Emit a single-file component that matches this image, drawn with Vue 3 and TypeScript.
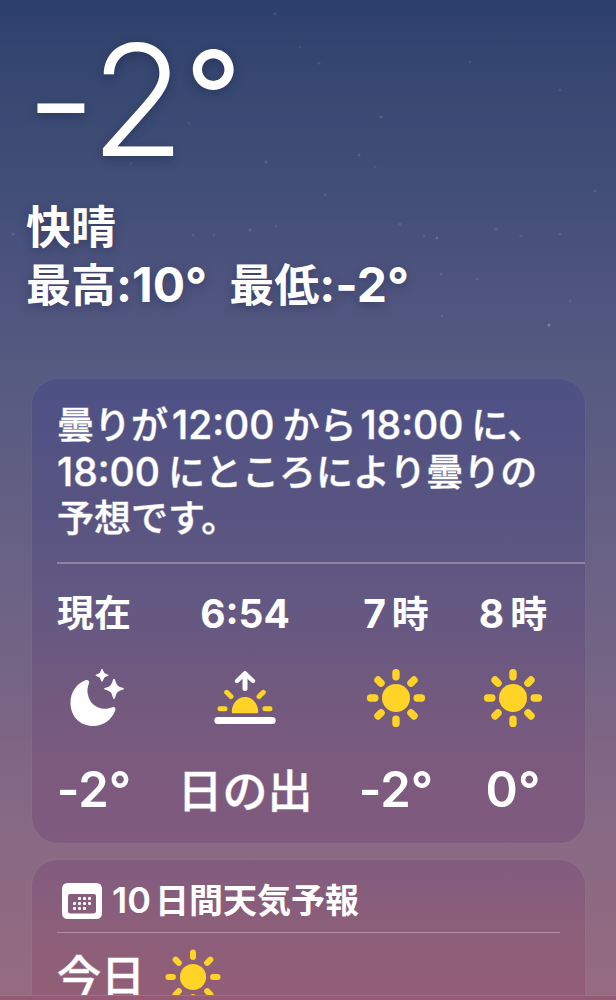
<script setup lang="ts">
type IconName = 'moon' | 'sunrise' | 'sun'

interface Hour {
  digits: string
  label: string
  icon: IconName
  iconLabel: string
  temp?: string
  event?: string
}

const hours: Hour[] = [
  { digits: '', label: '現在', icon: 'moon', iconLabel: '快晴の夜', temp: '-2°' },
  { digits: '6:54', label: '', icon: 'sunrise', iconLabel: '日の出', event: '日の出' },
  { digits: '7', label: '時', icon: 'sun', iconLabel: '晴れ', temp: '-2°' },
  { digits: '8', label: '時', icon: 'sun', iconLabel: '晴れ', temp: '0°' },
]

const rays = [0, 45, 90, 135, 180, 225, 270, 315]

const stars: [number, number, number][] = [
  [275, 14, 0.1], [381, 117, 0.13], [359, 155, 0.13], [266, 162, 0.13], [189, 123, 0.06],
  [319, 63, 0.1], [300, 47, 0.08], [375, 167, 0.08], [13, 234, 0.12], [250, 230, 0.13],
  [193, 235, 0.1], [214, 235, 0.08], [276, 226, 0.08], [325, 195, 0.09], [400, 224, 0.09],
  [424, 236, 0.09], [437, 238, 0.17], [496, 229, 0.09], [521, 236, 0.1], [560, 234, 0.1],
  [595, 191, 0.12], [441, 274, 0.12], [477, 279, 0.1], [570, 301, 0.09], [549, 325, 0.26],
  [442, 316, 0.09], [131, 163, 0.06], [470, 62, 0.08], [560, 90, 0.08],
]

const dots: [number, number][] = [
  [16, 14], [21, 14], [26, 14],
  [11, 19], [16, 19], [21, 19], [26, 19],
  [11, 24], [16, 24], [21, 24],
]
</script>

<template>
  <div class="screen">
    <svg class="stars" aria-hidden="true">
      <circle v-for="([x, y, o], i) in stars" :key="i" :cx="x" :cy="y" r="1.5" fill="#fff" :opacity="o" />
    </svg>

    <main class="content">
      <header class="hero">
        <h1 class="now">-2<span class="degree">°</span></h1>
        <p class="line">快晴</p>
        <p class="line range">
          <span>最高<span class="num">:10°</span></span>
          <span>最低<span class="num">:-2°</span></span>
        </p>
      </header>

      <section class="card hourly" aria-label="1時間ごとの天気">
        <p class="summary">
          曇りが<span class="num">12:00</span>から<span class="num">18:00</span>に、<br />
          <span class="num first">18:00</span>にところにより曇りの<br />
          予想です。
        </p>
        <ul class="hours">
          <li v-for="(h, i) in hours" :key="i" class="hour" :class="{ wide: h.event }">
            <span class="time"><span v-if="h.digits" class="num">{{ h.digits }}</span><span v-if="h.label">{{ h.label }}</span></span>
            <svg v-if="h.icon === 'moon'" class="icon" viewBox="0 0 60 60" role="img" :aria-label="h.iconLabel">
              <path fill="#fff" d="M21.5 12.3C23.8 11.4 25.8 13 25.1 15.3C23.3 19 23.2 22.8 23.7 25.8C25.2 34.7 32 40.7 40.5 40.7C43.8 40.7 46.3 40 48.5 39.2C50.7 38.7 52 40.2 51.3 42.3C47.7 51.9 39.5 58 29.3 58C16 58 6.5 48.4 6.5 34.7C6.5 24.5 12.3 15.7 21.5 12.3Z" />
              <path fill="#fff" d="M38 .7Q38.8 .7 39.1 2.4Q39.8 5.5 43 6.2Q44.7 6.6 44.7 7.2Q44.7 7.8 43 8.2Q39.8 8.9 39.1 12Q38.8 13.7 38 13.7Q37.2 13.7 36.9 12Q36.2 8.9 33 8.2Q31.5 7.8 31.5 7.2Q31.5 6.6 33 6.2Q36.2 5.5 36.9 2.4Q37.2 .7 38 .7Z" />
              <path fill="#fff" d="M50 10.7Q51 10.7 51.3 12.7Q52.5 18.2 57.5 19.5Q60 20 60 20.8Q60 21.6 57.5 22.1Q52.5 23.4 51.3 28.9Q51 31 50 31Q49 31 48.7 28.9Q47.5 23.4 42.5 22.1Q40 21.6 40 20.8Q40 20 42.5 19.5Q47.5 18.2 48.7 12.7Q49 10.7 50 10.7Z" />
            </svg>
            <svg v-else-if="h.icon === 'sunrise'" class="icon rise" viewBox="0 0 62 60" role="img" :aria-label="h.iconLabel">
              <g fill="none" stroke="#fff" stroke-linecap="round" stroke-linejoin="round">
                <path stroke-width="5" d="M31 6V20.500" />
                <path stroke-width="4.400" d="M23 13L31 5.300L39 13" />
                <path stroke-width="7" d="M3.800 52.500H58.200" />
              </g>
              <path fill="#ffd426" d="M19 45.300C17.900 45.300 17.700 44.200 17.800 43C18.400 35 24 29 31 29S43.600 35 44.200 43C44.300 44.200 44.100 45.300 43 45.300Z" />
              <path fill="none" stroke="#ffd426" stroke-width="5" stroke-linecap="round" d="M6 40.700H11M51 40.700H56M12.700 24.300L17 28.600M49.300 24.300L45 28.600" />
            </svg>
            <svg v-else class="icon" viewBox="0 0 60 60" role="img" :aria-label="h.iconLabel">
              <circle cx="30" cy="30" r="14" fill="#ffd426" />
              <rect v-for="r in rays" :key="r" x="26.3" y=".9" width="7.4" height="11.6" rx="3.7" fill="#ffd426" :transform="`rotate(${r} 30 30)`" />
            </svg>
            <span v-if="h.event" class="event">{{ h.event }}</span>
            <span v-else class="temp">{{ h.temp }}</span>
          </li>
        </ul>
      </section>

      <section class="card daily">
        <h2 class="title">
          <svg class="calendar" viewBox="0 0 40 36" aria-hidden="true">
            <path fill="#fff" fill-rule="evenodd" d="M6 0H34Q40 0 40 6V30Q40 36 34 36H6Q0 36 0 30V6Q0 0 6 0ZM8 11Q6 11 6 13V28Q6 30.5 8.5 30.5H31.5Q34 30.5 34 28V13Q34 11 32 11Z" />
            <rect v-for="([x, y], i) in dots" :key="i" :x="x" :y="y" width="3" height="3" rx="1" fill="#fff" />
          </svg>
          <span><span class="num">10</span>日間天気予報</span>
        </h2>
        <div class="day">
          <span class="name">今日</span>
          <svg class="icon" viewBox="0 0 60 60" role="img" aria-label="晴れ">
            <circle cx="30" cy="30" r="14" fill="#ffd426" />
            <rect v-for="r in rays" :key="r" x="26.8" y=".5" width="6.4" height="11.2" rx="3.2" fill="#ffd426" :transform="`rotate(${r} 30 30)`" />
          </svg>
        </div>
      </section>
    </main>
    <div class="dock"></div>
  </div>
</template>

<style>
body {
  background: #956a80;
}
</style>

<style scoped>
* {
  box-sizing: border-box;
  margin: 0;
}

.screen {
  position: relative;
  display: flex;
  flex-direction: column;
  height: 100vh;
  overflow: hidden;
  color: #fff;
  font-family: Inter, "Noto Sans CJK JP", sans-serif;
  font-weight: 500;
  background: linear-gradient(#2d406b 0%, #394972 10%, #434f79 20%, #50557f 30%, #565b81 38%, #625e83 49%, #6a6385 58%, #7b6585 72%, #896a84 84%, #966b80 100%);
}

.stars {
  position: absolute;
  inset: 0;
  width: 100%;
  height: 100%;
}

.content {
  position: relative;
  flex: 1;
  min-height: 0;
  overflow: hidden;
}

.dock {
  height: 5px;
  border-top: 1px solid #a26e86;
  background: #955b74;
}

.hero {
  padding: 20px 26px 0;
  font-feature-settings: "calt" 0;
  text-shadow: 0 3px 10px rgba(20, 25, 60, 0.35);
}

.now {
  height: 179px;
  font-size: 154px;
  font-weight: 300;
  line-height: 160px;
}

.degree {
  font-size: 124px;
  font-weight: 400;
  line-height: 100px;
  vertical-align: 16px;
}

.line {
  font-size: 45px;
  font-weight: 600;
  line-height: 57px;
  height: 57px;
}

.line .num {
  font-size: 48px;
  font-weight: 700;
}

.range {
  display: flex;
  gap: 22px;
  white-space: nowrap;
}

.card {
  margin: 0 31px 0 32px;
  border-radius: 26px;
  padding-left: 25px;
  box-shadow: 0 0 0 1px rgba(255, 255, 255, 0.03);
}

.hourly {
  margin-top: 66px;
  padding-top: 23px;
  background: linear-gradient(#4d5185, #585481 28%, #615883 45%, #70597f 65%, #7c5a7e 84%, #7f5b7e);
}

.summary {
  padding-bottom: 20px;
  border-bottom: 2px solid rgba(255, 255, 255, 0.28);
  font-size: 37px;
  line-height: 46px;
  white-space: nowrap;
  -webkit-text-stroke: 1px rgba(255, 255, 255, 0.5);
}

.summary .num {
  margin: 0 8px 0 4px;
  font-size: 39px;
  line-height: 46px;
}

.summary .first {
  margin-left: 0;
}

.hours {
  display: flex;
  justify-content: space-between;
  padding: 28px 39px 29px 1px;
  list-style: none;
}

.hour {
  display: flex;
  flex-direction: column;
  align-items: center;
  width: 72px;
  white-space: nowrap;
}

.hour:last-child {
  width: 66px;
}

.hour.wide {
  width: 134px;
}

.time {
  display: flex;
  align-items: baseline;
  gap: 6px;
  height: 42px;
  margin-bottom: 34px;
  font-size: 37px;
  font-weight: 700;
  line-height: 44px;
}

.time .num {
  font-size: 39px;
}

.icon {
  flex: none;
  width: 60px;
  height: 60px;
}

.rise {
  width: 62px;
}

.temp,
.event {
  height: 48px;
  margin-top: 38px;
  line-height: 48px;
}

.temp {
  font-size: 49px;
  font-weight: 600;
  font-feature-settings: "calt" 0;
}

.event {
  font-size: 45px;
  line-height: 52px;
  -webkit-text-stroke: 1px rgba(255, 255, 255, 0.5);
}

.daily {
  margin-top: 17px;
  padding-top: 17px;
  height: 240px;
  background: linear-gradient(#815c80, #8b5e7a 24%, #915e78 50%, #965d74 75%);
}

.title {
  display: flex;
  align-items: center;
  gap: 10px;
  height: 56px;
  margin-right: 25px;
  padding: 0 0 8px 5px;
  border-bottom: 1px solid rgba(255, 255, 255, 0.32);
  font-size: 34px;
  font-weight: 600;
  line-height: 48px;
  white-space: nowrap;
}

.title .num {
  margin-right: 4px;
  font-size: 36px;
}

.calendar {
  flex: none;
  width: 40px;
  height: 36px;
}

.day {
  display: flex;
  align-items: center;
  gap: 20px;
  height: 88px;
  font-size: 44px;
}

.name {
  line-height: 48px;
  -webkit-text-stroke: 1px rgba(255, 255, 255, 0.5);
}

.day .icon {
  width: 56px;
  height: 56px;
}
</style>
